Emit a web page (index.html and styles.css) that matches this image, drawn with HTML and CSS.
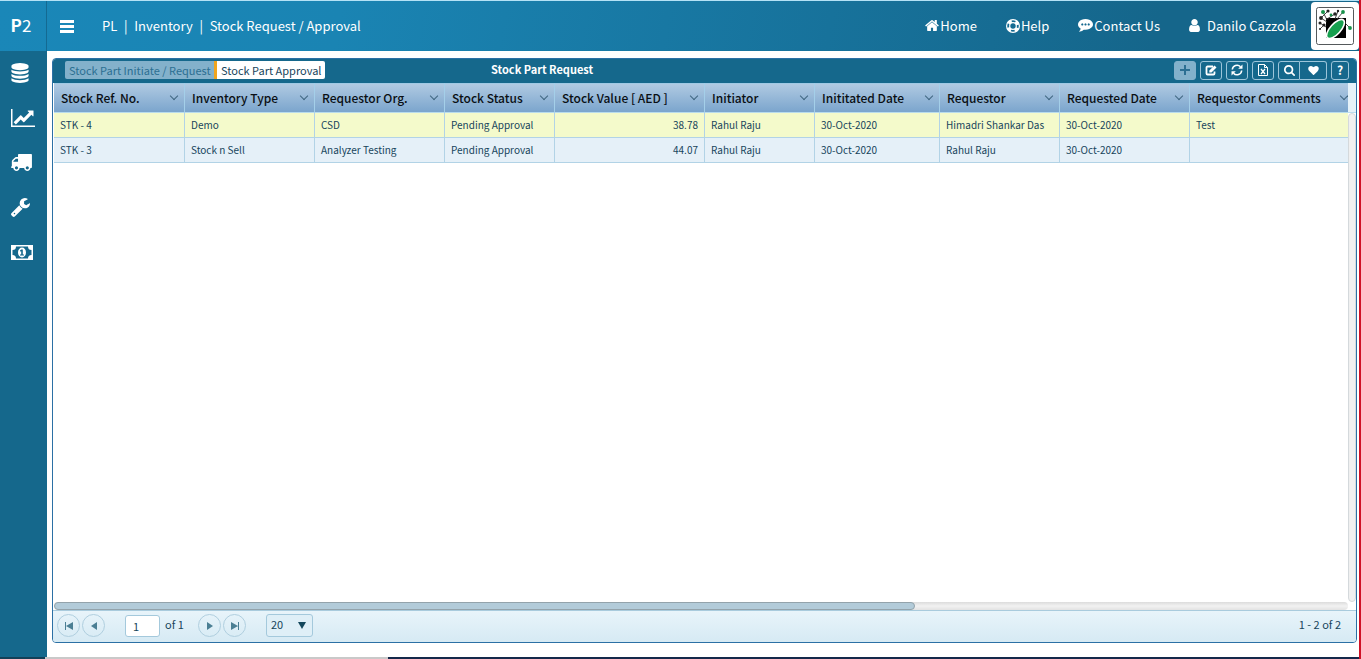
FILE: index.html
```html
<!DOCTYPE html>
<html lang="en">
<head>
<meta charset="utf-8">
<title>Stock Request / Approval</title>
<link rel="stylesheet" href="styles.css">
</head>
<body>
<div class="app">
  <header class="topbar">
    <a class="brand" href="#"><b>P</b>2</a>
    <button class="menu-btn" type="button" aria-label="Toggle menu">
      <svg viewBox="0 0 14 13" width="14" height="13"><path d="M0 0h14v3H0zM0 5h14v3H0zM0 10h14v3H0z"/></svg>
    </button>
    <nav class="crumbs" aria-label="Breadcrumb">
      <a href="#">PL</a><span class="sep">|</span><a href="#">Inventory</a><span class="sep">|</span><a href="#">Stock Request / Approval</a>
    </nav>
    <nav class="links" aria-label="Account">
      <a href="#"><svg viewBox="64 128 1664 1536" width="14" height="13"><path d="M1472 992v480q0 26-19 45t-45 19h-384v-384h-256v384h-384q-26 0-45-19t-19-45v-480q0-1 .5-3t.5-3l575-474 575 474q1 2 1 6zm223-69l-62 74q-8 9-21 11h-3q-13 0-21-7l-692-577-692 577q-12 8-24 7-13-2-21-11l-62-74q-8-10-7-23.500t11-21.500l719-599q32-26 76-26t76 26l244 204v-195q0-14 9-23t23-9h192q14 0 23 9t9 23v408l219 182q10 8 11 21.500t-7 23.500z"/></svg>Home</a>
      <a href="#"><svg viewBox="0 0 14 14" width="14" height="14"><g fill="none" stroke="currentColor"><circle cx="7" cy="7" r="6.400" stroke-width="1.200"/><circle cx="7" cy="7" r="3.300" stroke-width="1.200"/><circle cx="7" cy="7" r="4.900" stroke-width="3.200" stroke-dasharray="3.850 3.850" stroke-dashoffset="-1.920"/></g></svg>Help</a>
      <a href="#"><svg viewBox="0 256 1792 1536" width="15" height="13"><path d="M640 896q0-53-37.500-90.500t-90.500-37.500-90.500 37.500-37.500 90.500 37.500 90.500 90.500 37.500 90.500-37.500 37.500-90.500zm384 0q0-53-37.500-90.500t-90.500-37.500-90.500 37.500-37.500 90.500 37.500 90.500 90.500 37.500 90.500-37.500 37.500-90.500zm384 0q0-53-37.500-90.500t-90.500-37.500-90.500 37.500-37.500 90.500 37.500 90.500 90.500 37.500 90.500-37.500 37.500-90.500zm384 0q0 174-120 321.500t-326 233-450 85.500q-110 0-211-18-173 173-435 229-52 10-86 13-12 1-22-6t-13-18q-4-15 20-37 5-5 23.500-21.500t25.500-23.500 23.500-25.500 24-31.500 20.500-37 20-48 14.500-57.500 12.500-72.500q-146-90-229.500-216.500t-83.500-269.500q0-174 120-321.500t326-233 450-85.500 450 85.500 326 233 120 321.500z"/></svg>Contact Us</a>
      <a class="user" href="#"><svg viewBox="256 128 1280 1536" width="11" height="13"><path d="M1536 1399q0 109-62.500 187t-150.500 78h-854q-88 0-150.500-78t-62.500-187q0-85 8.500-160.500t31.500-152 58.500-131 94-89 134.500-34.500q131 128 313 128t313-128q76 0 134.500 34.500t94 89 58.500 131 31.500 152 8.500 160.500zm-256-887q0 159-112.500 271.500t-271.500 112.500-271.500-112.500-112.500-271.500 112.500-271.500 271.500-112.500 271.500 112.500 112.500 271.500z"/></svg>Danilo Cazzola</a>
    </nav>
    <div class="logo">
      <svg viewBox="0 0 38 38" width="38" height="38">
        <rect x=".5" y=".5" width="37" height="37" rx="2" fill="#fff" stroke="#55595b"/>
        <rect x="10" y="11" width="20" height="20" fill="#000"/>
        <g fill="none" stroke="#333" stroke-width=".9"><path d="M7 5l4 8M12 4l-7 7 6 4M19 7l-8 5M27 5l-6 7M22 4l-3 8M4 16l6 4M8 18l-4 4M30 17l4 4"/></g>
        <g fill="#17924a"><circle cx="7" cy="5" r="2"/><circle cx="27" cy="5" r="1.900"/><circle cx="34" cy="21" r="1.900"/><circle cx="15" cy="8" r="1.400"/></g>
        <g fill="#222"><circle cx="12" cy="4" r="1.600"/><circle cx="5" cy="11" r="1.900"/><circle cx="19" cy="7" r="1.800"/><circle cx="22" cy="4" r="1.200"/><circle cx="4" cy="16" r="1.500"/><circle cx="8" cy="18" r="1.600"/><circle cx="4" cy="22" r="1"/></g>
        <ellipse cx="19.500" cy="22" rx="12" ry="5.200" transform="rotate(-48 19.500 22)" fill="#16a04f" stroke="#fff" stroke-width="1.600"/>
      </svg>
    </div>
  </header>

  <div class="body">
    <nav class="sidebar" aria-label="Modules">
      <a href="#" aria-label="Masters"><svg viewBox="128 0 1536 1792" width="18" height="20"><path d="M896 768q237 0 443-43t325-127v170q0 69-103 128t-280 93.500-385 34.500-385-34.500-280-93.500-103-128v-170q119 84 325 127t443 43zm0 768q237 0 443-43t325-127v170q0 69-103 128t-280 93.500-385 34.500-385-34.500-280-93.500-103-128v-170q119 84 325 127t443 43zm0-384q237 0 443-43t325-127v170q0 69-103 128t-280 93.500-385 34.500-385-34.500-280-93.500-103-128v-170q119 84 325 127t443 43zm0-1152q208 0 385 34.500t280 93.500 103 128v128q0 69-103 128t-280 93.500-385 34.500-385-34.500-280-93.500-103-128v-128q0-69 103-128t280-93.500 385-34.500z"/></svg></a>
      <a href="#" aria-label="Sales"><svg viewBox="0 128 2048 1536" width="24" height="18"><path d="M2048 1536v128h-2048v-1536h128v1408h1920zm-128-1248v435q0 21-19.500 29.500t-35.500-7.500l-121-121-633 633q-10 10-23 10t-23-10l-233-233-416 416-192-192 585-585q10-10 23-10t23 10l233 233 464-464-121-121q-16-16-7.500-35.500t29.500-19.500h435q14 0 23 9t9 23z"/></svg></a>
      <a href="#" aria-label="Logistics"><svg viewBox="64 256 1728 1408" width="21" height="17"><path d="M640 1408q0-52-38-90t-90-38-90 38-38 90 38 90 90 38 90-38 38-90zm-384-512h384v-256h-158q-13 0-22 9l-195 195q-9 9-9 22v30zm1280 512q0-52-38-90t-90-38-90 38-38 90 38 90 90 38 90-38 38-90zm256-1088v1024q0 15-4 26.500t-13.500 18.500-16.500 11.500-23.500 6-22.500 2-25.500 0-22.500-.5q0 106-75 181t-181 75-181-75-75-181h-384q0 106-75 181t-181 75-181-75-75-181h-64q-3 0-22.500.5t-25.500 0-22.500-2-23.500-6-16.500-11.500-13.500-18.500-4-26.500q0-26 19-45t45-19v-320q0-8-.5-35t0-38 2.500-34.500 6.500-37 14-30.500 22.500-30l198-198q19-19 50.500-32t58.500-13h160v-192q0-26 19-45t45-19h1024q26 0 45 19t19 45z"/></svg></a>
      <a href="#" aria-label="Service"><svg viewBox="85 128 1641 1643" width="19" height="19"><path d="M448 1472q0-26-19-45t-45-19-45 19-19 45 19 45 45 19 45-19 19-45zm644-420l-682 682q-37 37-90 37-52 0-91-37l-106-108q-38-36-38-90 0-53 38-91l681-681q39 98 114.500 173.500t173.500 114.500zm634-435q0 39-23 106-47 134-164.500 217.500t-258.500 83.500q-185 0-316.500-131.500t-131.500-316.500 131.500-316.500 316.500-131.500q58 0 121.500 16.500t107.500 46.500q16 11 16 28t-16 28l-293 169v224l193 107q5-3 79-48.500t135.500-81 70.500-35.500q15 0 23.500 10t8.500 25z"/></svg></a>
      <a href="#" aria-label="Finance"><svg viewBox="0 0 22 15" width="22" height="15"><path fill-rule="evenodd" d="M0 0h22v15H0zM5 1.500A3.500 3.500 0 0 1 1.500 5v5A3.500 3.500 0 0 1 5 13.500h12a3.500 3.500 0 0 1 3.500-3.500V5A3.500 3.500 0 0 1 17 1.500z"/><ellipse cx="11" cy="7.500" rx="4" ry="5"/><path class="cut" d="M10.300 4.500h1.500v5h1.200v1H9v-1h1.200V6.200L9 6.600V5.500z"/></svg></a>
    </nav>

    <main class="content">
      <section class="panel">
        <div class="panel-head">
          <div class="tabs">
            <button class="tab tab-off" type="button">Stock Part Initiate / Request</button>
            <button class="tab tab-on" type="button">Stock Part Approval</button>
          </div>
          <h1 class="title">Stock Part Request</h1>
          <div class="tools">
            <button class="tool tool-off" type="button" aria-label="Add"><svg viewBox="0 0 10 10" width="10" height="10"><path d="M4 0h2v4h4v2H6v4H4V6H0V4h4z"/></svg></button>
            <button class="tool" type="button" aria-label="Edit"><svg viewBox="0 0 12 11" width="12" height="11"><path d="M8 1.500H2.500a1 1 0 0 0-1 1v6a1 1 0 0 0 1 1h6a1 1 0 0 0 1-1V6.500" fill="none" stroke="currentColor" stroke-width="1.800"/><path d="M9.500.5l2 2L6.500 7.500H4.300V5.500z"/></svg></button>
            <button class="tool" type="button" aria-label="Refresh"><svg viewBox="0 0 12 12" width="12" height="12"><path d="M1.300 5.500A4.700 4.700 0 0 1 9.500 2.800M10.700 6.500A4.700 4.700 0 0 1 2.500 9.200" fill="none" stroke="currentColor" stroke-width="1.500"/><path d="M11.500.5v4.300H7.200zM.5 11.500V7.200h4.300z"/></svg></button>
            <button class="tool" type="button" aria-label="Export to Excel"><svg viewBox="0 0 10 12" width="10" height="12"><g fill="none" stroke="currentColor"><path d="M.5.5h6l3 3v8h-9z"/><path d="M6.500.5v3h3"/><path d="M3 5l4 5M7 5l-4 5" stroke-width="1.300"/></g></svg></button>
            <div class="tool-pair">
              <button class="tool" type="button" aria-label="Search"><svg viewBox="64 128 1664 1664" width="11" height="11"><path d="M1216 832q0-185-131.500-316.500t-316.500-131.500-316.500 131.500-131.500 316.500 131.500 316.500 316.500 131.500 316.500-131.500 131.500-316.500zm512 832q0 52-38 90t-90 38q-54 0-90-38l-343-342q-179 124-399 124-143 0-273.500-55.500t-225-150-150-225-55.500-273.500 55.500-273.500 150-225 225-150 273.500-55.500 273.500 55.500 225 150 150 225 55.500 273.500q0 220-124 399l343 343q37 37 37 90z"/></svg></button>
              <button class="tool tool-fav" type="button" aria-label="Favourite"><svg viewBox="0 128 1792 1536" width="11" height="9"><path d="M896 1664q-26 0-44-18l-624-602q-10-8-27.500-26t-55.500-65.500-68-97.500-53.500-121-23.500-138q0-220 127-344t351-124q62 0 126.500 21.500t120 58 95.500 68.500 76 68q36-36 76-68t95.500-68.500 120-58 126.500-21.500q224 0 351 124t127 344q0 221-229 450l-623 600q-18 18-44 18z"/></svg></button>
            </div>
            <button class="tool tool-help" type="button">?</button>
          </div>
        </div>

        <div class="grid-area">
          <div class="grid-main">
            <table class="grid">
              <colgroup><col class="w-ref"><col class="w-130"><col class="w-130"><col class="w-110"><col class="w-150"><col class="w-110"><col class="w-125"><col class="w-120"><col class="w-130"><col></colgroup>
              <thead>
                <tr>
                  <th><div class="th">Stock Ref. No.<i class="chev"></i></div></th>
                  <th><div class="th">Inventory Type<i class="chev"></i></div></th>
                  <th><div class="th">Requestor Org.<i class="chev"></i></div></th>
                  <th><div class="th">Stock Status<i class="chev"></i></div></th>
                  <th><div class="th">Stock Value [ AED ]<i class="chev"></i></div></th>
                  <th><div class="th">Initiator<i class="chev"></i></div></th>
                  <th><div class="th">Inititated Date<i class="chev"></i></div></th>
                  <th><div class="th">Requestor<i class="chev"></i></div></th>
                  <th><div class="th">Requested Date<i class="chev"></i></div></th>
                  <th><div class="th th-last">Requestor Comments<i class="chev"></i></div></th>
                </tr>
              </thead>
              <tbody>
                <tr class="hover"><td>STK - 4</td><td>Demo</td><td>CSD</td><td>Pending Approval</td><td class="num">38.78</td><td>Rahul Raju</td><td>30-Oct-2020</td><td>Himadri Shankar Das</td><td>30-Oct-2020</td><td>Test</td></tr>
                <tr><td>STK - 3</td><td>Stock n Sell</td><td>Analyzer Testing</td><td>Pending Approval</td><td class="num">44.07</td><td>Rahul Raju</td><td>30-Oct-2020</td><td>Rahul Raju</td><td>30-Oct-2020</td><td></td></tr>
              </tbody>
            </table>
            <div class="hbar"><div class="hthumb"></div></div>
          </div>
          <div class="vside"><div class="vhead"></div><div class="vbar"></div></div>
        </div>

        <div class="pager">
          <button class="pg" type="button" aria-label="First page"><svg viewBox="0 0 8 8" width="8" height="8"><path d="M0 0h1v8H0zM8 0v8L1 4z"/></svg></button>
          <button class="pg" type="button" aria-label="Previous page"><svg viewBox="0 0 6 8" width="6" height="8"><path d="M6 0v8L0 4z"/></svg></button>
          <input class="page-no" type="text" value="1" aria-label="Page number">
          <span class="of">of 1</span>
          <button class="pg" type="button" aria-label="Next page"><svg viewBox="0 0 6 8" width="6" height="8"><path d="M0 0v8l6-4z"/></svg></button>
          <button class="pg" type="button" aria-label="Last page"><svg viewBox="0 0 8 8" width="8" height="8"><path d="M7 0h1v8H7zM0 0v8l7-4z"/></svg></button>
          <div class="size-wrap">
            <select class="size" aria-label="Rows per page"><option>20</option><option>50</option></select>
            <svg class="size-arrow" viewBox="0 0 8 7" width="8" height="7"><path d="M0 0h8L4 7z"/></svg>
          </div>
          <span class="range">1 - 2 of 2</span>
        </div>
      </section>
    </main>
  </div>
  <div class="edge"><span class="edge-dark"></span><span class="edge-light"></span><span class="edge-navy"></span></div>
</div>
</body>
</html>
```
FILE: styles.css
```css
* { box-sizing: border-box; }
html, body { margin: 0; height: 100%; }
body {
  font-family: "Noto Sans CJK SC", "Noto Sans", sans-serif;
  font-size: 11px;
  line-height: 16px;
  color: #17455c;
  background: #fff;
}
a { color: inherit; text-decoration: none; }
button, input, select { font: inherit; color: inherit; margin: 0; padding: 0; }
svg { display: block; fill: currentColor; flex: none; }

.app {
  display: flex;
  flex-direction: column;
  min-height: 100vh;
  border-right: 2px solid #cf1126;
}

/* top bar */
.topbar {
  display: flex;
  align-items: center;
  height: 51px;
  border-top: 1px solid #b4e2f6;
  background: linear-gradient(100deg, #1a87b8 0%, #1a84b3 25%, #15668b 85%, #15668b 100%);
  color: #fff;
  font-size: 13px;
  line-height: 20px;
}
.brand {
  width: 47px;
  height: 50px;
  padding-right: 4px;
  border-right: 1px solid #146a92;
  line-height: 48px;
  text-align: center;
  font-size: 17px;
}
.menu-btn { margin-left: 13px; border: 0; background: none; color: #fff; }
.crumbs { display: flex; margin-left: 28px; }
.crumbs a { white-space: nowrap; }
.sep { width: 17px; text-align: center; }
.links { display: flex; margin-left: auto; padding-bottom: 1px; gap: 29px; }
.links a { display: flex; align-items: center; gap: 1px; white-space: nowrap; }
.links .user { gap: 7px; }
.logo {
  flex: none;
  margin-left: 15px;
  padding: 5px;
  border-radius: 4px;
  background: #fff;
}

/* body */
.body { flex: 1; display: flex; }
.sidebar {
  width: 47px;
  padding-left: 11px;
  background: #15688c;
  color: #fff;
}
.sidebar a { display: flex; align-items: center; height: 45px; padding-bottom: 2px; }
.cut { fill: #15688c; }
.content { flex: 1; display: flex; min-width: 0; padding: 7px 2px 14px 5px; }

.panel {
  flex: 1;
  display: flex;
  flex-direction: column;
  min-width: 0;
  border: 1px solid #2b70a5;
  border-radius: 4px;
  overflow: hidden;
}
.panel-head {
  display: flex;
  align-items: center;
  height: 24px;
  padding: 0 7px 2px 12px;
  background: #15688c;
}
.tabs { display: flex; }
.tab { height: 18px; border: 0; line-height: 16px; padding: 0 4px; white-space: nowrap; }
.tab-off { width: 149px; background: #83b1cb; color: #2c6f92; border-radius: 2px 0 0 2px; }
.tab-on {
  width: 111px;
  border-left: 3px solid #f0a51e;
  background: #fff;
  color: #17455c;
  border-radius: 0 2px 2px 0;
}
.title {
  margin: 0 0 2px 166px;
  color: #fff;
  font-size: 11px;
  font-weight: 700;
  white-space: nowrap;
}
.tools { display: flex; gap: 4px; margin-left: auto; }
.tool {
  display: flex;
  align-items: center;
  justify-content: center;
  width: 22px;
  height: 19px;
  border: 1px solid #9cc5da;
  border-radius: 3px;
  background: none;
  color: #fff;
}
.tool-off { background: #83b1cb; color: #2c6f92; border-color: #83b1cb; }
.tool-pair { display: flex; }
.tool-pair .tool:first-child { border-radius: 3px 0 0 3px; }
.tool-pair .tool-fav { width: 27px; border-left: 0; border-radius: 0 3px 3px 0; }
.tool-help { width: 18px; font-weight: 700; font-size: 12px; }

/* grid */
.grid-area { flex: 1; display: flex; min-height: 0; padding-left: 1px; background: #fff; }
.grid-main { flex: 1; display: flex; flex-direction: column; min-width: 0; overflow: hidden; }
.grid { width: 100%; table-layout: fixed; border-collapse: separate; border-spacing: 0; }
.w-ref { width: 131px; }
.w-110 { width: 110px; }
.w-120 { width: 120px; }
.w-125 { width: 125px; }
.w-130 { width: 130px; }
.w-150 { width: 150px; }
.grid th {
  height: 30px;
  padding: 0;
  border-right: 1px solid #a4cfe9;
  border-top: 1px solid #9fc9e4;
  border-bottom: 1px solid #b9dcec;
  background: linear-gradient(#b0cae2, #7ba5cd);
  color: #0a0f14;
  font-size: 12px;
  font-weight: 500;
  text-align: left;
  white-space: nowrap;
}
.th { display: flex; align-items: center; justify-content: space-between; padding: 0 6px 0 7px; }
.grid th:last-child, .grid td:last-child { border-right: 0; }
.grid th .th-last { padding-right: 0; }
.chev {
  width: 6px;
  height: 6px;
  margin: 0 1px 5px 0;
  border: solid #3f6680;
  border-width: 0 1px 1px 0;
  transform: rotate(45deg);
}
.grid td {
  height: 25px;
  padding: 0 6px 1px;
  border-right: 1px solid #b2d3e6;
  border-bottom: 1px solid #b2d3e6;
  background: #e5f0f8;
  font-size: 10px;
  line-height: 16px;
  white-space: nowrap;
}
.grid .hover td { background: #f4facb; }
.grid .num { text-align: right; }
.hbar {
  height: 8px;
  margin-top: auto;
  border-radius: 4px;
  background: linear-gradient(#dcdcdc, #f2f2f2 50%, #e2e2e2);
}
.hthumb {
  width: 66.5%;
  height: 8px;
  border: 1px solid #93a3ab;
  border-radius: 4px;
  background: #b2cbd9;
}
.vside { display: flex; flex-direction: column; width: 8px; padding-bottom: 8px; }
.vhead { height: 30px; background: #e5f2f9; border-bottom: 1px solid #b9dcec; }
.vbar { flex: 1; border: 1px solid #d4d9dc; border-radius: 4px; background: #f0f0f0; }

/* pager */
.pager {
  display: flex;
  align-items: center;
  height: 32px;
  padding: 0 15px 2px 4px;
  border-top: 1px solid #a9cbdd;
  background: linear-gradient(#e8f4fa, #d6eaf4);
}
.pg {
  display: flex;
  align-items: center;
  justify-content: center;
  width: 23px;
  height: 23px;
  margin-right: 2px;
  border: 1px solid #b0cfdf;
  border-radius: 12px;
  background: none;
  color: #4b7f94;
}
.page-no {
  width: 35px;
  height: 22px;
  margin-left: 18px;
  padding: 0 7px;
  border: 1px solid #a4c9dc;
  border-radius: 3px;
  background: #fff;
}
.of { width: 33px; margin-left: 5px; padding-bottom: 4px; }
.size-wrap { display: grid; align-items: center; margin-left: 18px; }
.size {
  grid-area: 1 / 1;
  appearance: none;
  width: 47px;
  height: 23px;
  padding: 0 4px 3px;
  border: 1px solid #a4c9dc;
  border-radius: 3px;
  background: #dfeff7;
}
.size-arrow { grid-area: 1 / 1; justify-self: end; margin-right: 7px; color: #14475c; pointer-events: none; }
.range { margin-left: auto; padding-bottom: 4px; }

/* bottom edge strip */
.edge { display: flex; height: 2px; }
.edge-dark { width: 45px; background: #124058; }
.edge-light { width: 343px; background: #c9c9c9; }
.edge-navy { flex: 1; background: #14284a; }
```
